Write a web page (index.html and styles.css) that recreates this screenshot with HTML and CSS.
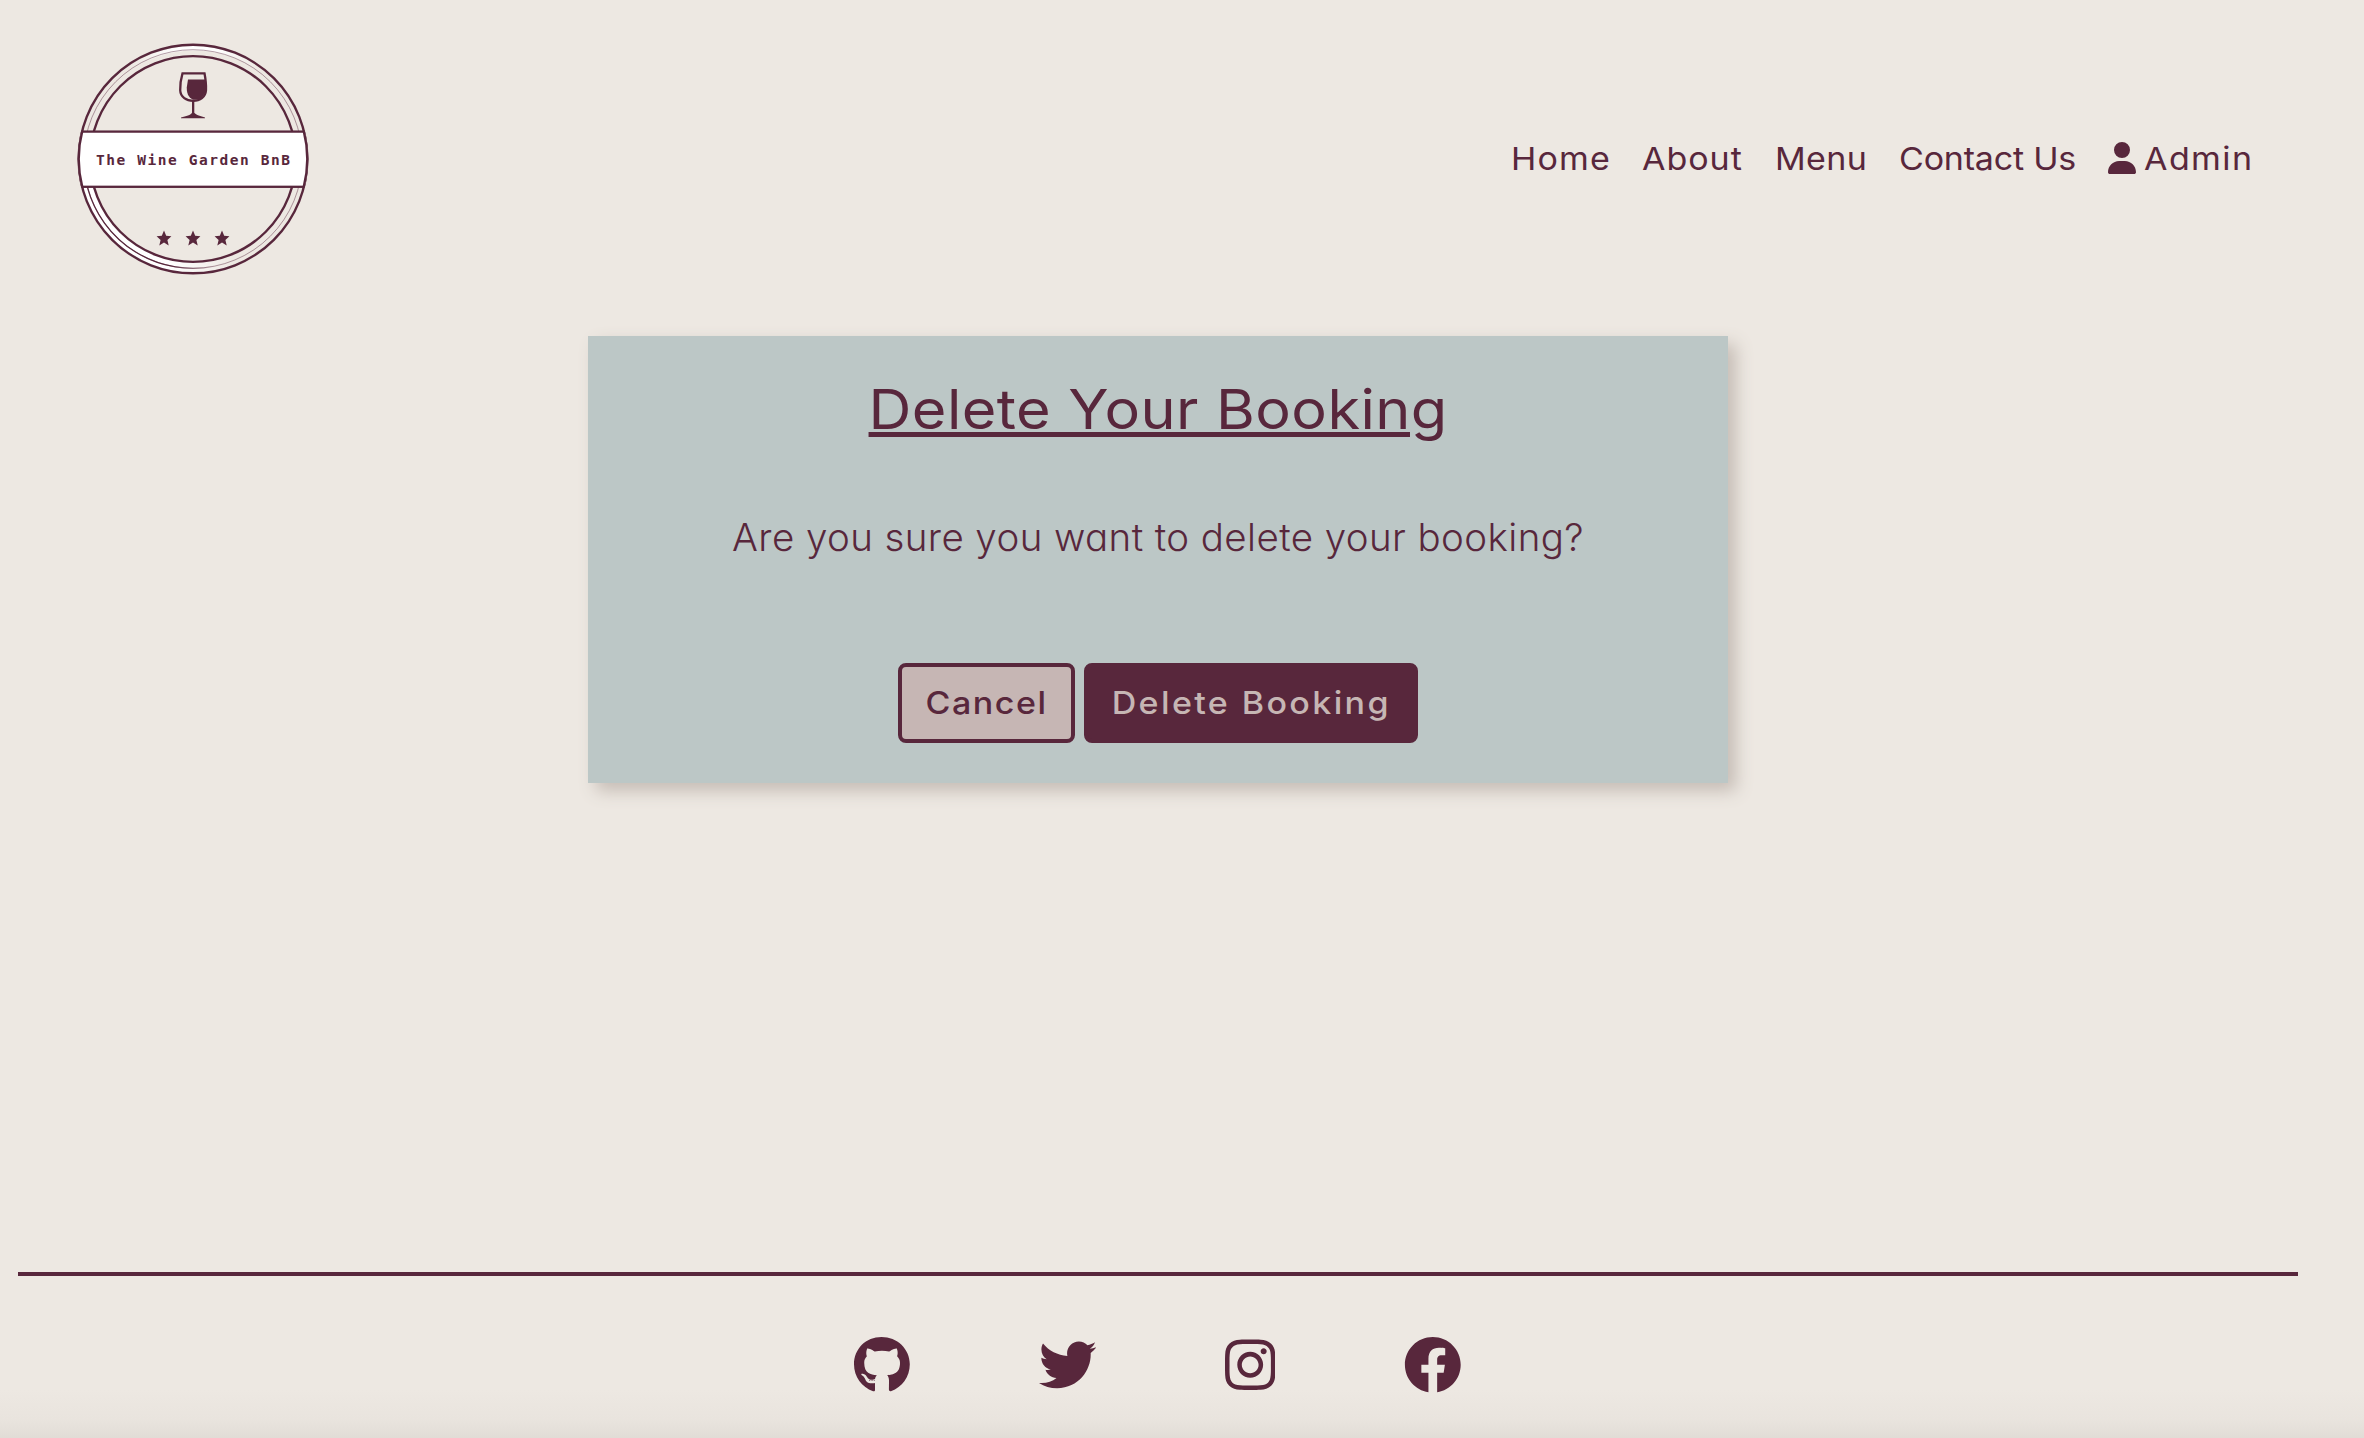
FILE: index.html
```html
<!DOCTYPE html>
<html lang="en">
<head>
<meta charset="utf-8">
<title>The Wine Garden BnB</title>
<link rel="stylesheet" href="styles.css">
</head>
<body>
<header class="header">
  <a class="logo" aria-label="The Wine Garden BnB">
    <svg width="234" height="234" viewBox="76 41.7 234 234">
      <defs>
        <linearGradient id="top" gradientUnits="userSpaceOnUse" x1="130" y1="0" x2="262" y2="0">
          <stop offset="0" stop-color="#fff" stop-opacity="0"/><stop offset=".35" stop-color="#fff"/><stop offset=".65" stop-color="#fff"/><stop offset="1" stop-color="#fff" stop-opacity="0"/>
        </linearGradient>
        <linearGradient id="low" gradientUnits="userSpaceOnUse" x1="170" y1="0" x2="235" y2="0">
          <stop offset="0" stop-color="#fff"/><stop offset="1" stop-color="#fff" stop-opacity="0"/>
        </linearGradient>
        <linearGradient id="line" gradientUnits="userSpaceOnUse" x1="170" y1="0" x2="215" y2="0">
          <stop offset="0" stop-color="#58273c"/><stop offset="1" stop-color="#58273c" stop-opacity="0"/>
        </linearGradient>
        <clipPath id="disc"><circle cx="193" cy="158.7" r="115"/></clipPath>
      </defs>
      <g fill="none" stroke="#58273c">
        <path d="M130 68A111.5 111.5 0 0 1 262 71" stroke="url(#top)" stroke-width="4.5"/>
        <path d="M84 187A112.5 112.5 0 0 0 235 263" stroke="url(#low)" stroke-width="5"/>
        <path d="M90 187A106 106 0 0 0 235 256" stroke="url(#low)" stroke-width="7"/>
        <circle cx="193" cy="158.7" r="114.3" stroke-width="2.4"/>
        <circle cx="193" cy="158.7" r="109.3" stroke-width=".6" opacity=".75"/>
        <path d="M87.5 187A109.3 109.3 0 0 0 215 265.8" stroke="url(#line)" stroke-width="1.3"/>
        <circle cx="193" cy="158.7" r="102.9" stroke-width="2.4"/>
      </g>
      <g clip-path="url(#disc)">
        <rect x="70" y="131.3" width="246" height="55.2" fill="#fff" stroke="#58273c" stroke-width="2.300"/>
      </g>
      <path d="M82.3 130.5A114.3 114.3 0 0 0 82.3 187M303.700 130.500A114.300 114.300 0 0 1 303.700 187" fill="none" stroke="#58273c" stroke-width="2.400"/>
      <text x="96" y="164.7" class="logo-text" textLength="194">The Wine Garden BnB</text>
      <path d="M182.500 73H204.500C206 81 206.200 86 206 90C205.500 97 200 100.500 193.200 100.500S180.500 97 180.200 90C180 84 181 78 182.500 73Z" fill="#ede8e2" stroke="#58273c" stroke-width="2.300"/>
      <path d="M188 79.300H205.500V92L201 99L193 99.500C187.500 96.500 186.700 92 186.800 87Z" fill="#58273c"/>
      <path d="M192 100H194.300V112.500C196 115 201 116 205 117.200V118H181V117.200C186 116 191 115 192 112.500Z" fill="#58273c"/>
      <g fill="#58273c">
        <path id="star" d="M164 230.200L166.200 235.400L171.400 235.900L167.400 239.600L168.700 245.200L164 242.300L159.300 245.200L160.600 239.600L156.600 235.900L161.800 235.400Z"/>
        <use href="#star" x="29"/><use href="#star" x="58"/>
      </g>
    </svg>
  </a>
  <nav class="nav">
    <a class="nav-link home"><span class="wide">Home</span></a>
    <a class="nav-link about"><span class="wide">About</span></a>
    <a class="nav-link menu"><span class="wide">Menu</span></a>
    <a class="nav-link contact"><span class="wide">Contact Us</span></a>
    <a class="nav-link admin"><svg class="user" viewBox="0 0 448 512"><path d="M224 256A128 128 0 1 0 224 0a128 128 0 1 0 0 256zm-45.700 48C79.800 304 0 383.800 0 482.300C0 498.700 13.300 512 29.700 512H418.300c16.400 0 29.700-13.300 29.700-29.700C448 383.800 368.200 304 269.700 304H178.300z"/></svg><span class="wide">Admin</span></a>
  </nav>
</header>
<main class="card">
  <h1 class="title">Delete Your Booking</h1>
  <p class="question">Are you sure you want to delete your booking?</p>
  <div class="actions">
    <button class="btn cancel"><span>Cancel</span></button>
    <button class="btn delete"><span>Delete Booking</span></button>
  </div>
</main>
<footer class="footer">
  <svg class="social" viewBox="0 0 496 512" width="55.8"><path d="M165.900 397.400c0 2-2.300 3.600-5.200 3.600-3.300.3-5.600-1.300-5.600-3.600 0-2 2.300-3.600 5.200-3.600 3-.3 5.600 1.300 5.600 3.600zm-31.100-4.500c-.7 2 1.300 4.300 4.300 4.900 2.600 1 5.600 0 6.200-2s-1.300-4.300-4.300-5.200c-2.600-.7-5.500.3-6.200 2.300zm44.200-1.700c-2.900.7-4.900 2.600-4.600 4.900.3 2 2.900 3.300 5.900 2.600 2.900-.7 4.900-2.600 4.600-4.600-.3-1.900-3-3.200-5.900-2.900zM244.800 8C106.100 8 0 113.300 0 252c0 110.900 69.800 205.800 169.500 239.200 12.800 2.300 17.300-5.600 17.300-12.100 0-6.200-.3-40.400-.3-61.400 0 0-70 15-84.700-29.800 0 0-11.400-29.100-27.800-36.600 0 0-22.900-15.700 1.600-15.400 0 0 24.900 2 38.600 25.800 21.900 38.600 58.600 27.500 72.900 20.900 2.300-16 8.800-27.100 16-33.700-55.900-6.200-112.300-14.300-112.300-110.500 0-27.500 7.600-41.300 23.600-58.900-2.600-6.500-11.100-33.300 2.600-67.900 20.900-6.500 69 27 69 27 20-5.600 41.500-8.500 62.800-8.500s42.800 2.900 62.800 8.500c0 0 48.100-33.600 69-27 13.700 34.700 5.200 61.400 2.600 67.900 16 17.700 25.800 31.500 25.800 58.900 0 96.500-58.900 104.200-114.800 110.500 9.200 7.900 17 22.900 17 46.400 0 33.700-.3 75.400-.3 83.600 0 6.500 4.600 14.400 17.300 12.100C428.200 457.800 496 362.900 496 252 496 113.300 383.500 8 244.800 8z"/></svg>
  <svg class="social" viewBox="0 0 512 512" width="57.6"><path d="M459.370 151.716c.325 4.548.325 9.097.325 13.645 0 138.720-105.583 298.558-298.558 298.558-59.452 0-114.680-17.219-161.137-47.106 8.447.974 16.568 1.299 25.340 1.299 49.055 0 94.213-16.568 130.274-44.832-46.132-.975-84.792-31.188-98.112-72.772 6.498.974 12.995 1.624 19.818 1.624 9.421 0 18.843-1.300 27.614-3.573-48.081-9.747-84.143-51.980-84.143-102.985v-1.299c13.969 7.797 30.214 12.670 47.431 13.319-28.264-18.843-46.781-51.005-46.781-87.391 0-19.492 5.197-37.360 14.294-52.954 51.655 63.675 129.300 105.258 216.365 109.807-1.624-7.797-2.599-15.918-2.599-24.040 0-57.828 46.782-104.934 104.934-104.934 30.213 0 57.502 12.670 76.670 33.137 23.715-4.548 46.456-13.320 66.599-25.340-7.798 24.366-24.366 44.833-46.132 57.827 21.117-2.273 41.584-8.122 60.426-16.243-14.292 20.791-32.161 39.308-52.628 54.253z"/></svg>
  <svg class="social" viewBox="0 0 448 512" width="50.4"><path d="M224.100 141c-63.600 0-114.900 51.300-114.900 114.900s51.300 114.900 114.900 114.900S339 319.500 339 255.900 287.700 141 224.100 141zm0 189.600c-41.100 0-74.700-33.500-74.700-74.700s33.500-74.700 74.700-74.700 74.700 33.500 74.700 74.700-33.600 74.700-74.700 74.700zm146.400-194.300c0 14.900-12 26.800-26.800 26.800-14.900 0-26.800-12-26.800-26.800s12-26.800 26.800-26.800 26.800 12 26.800 26.800zm76.100 27.200c-1.700-35.900-9.900-67.700-36.200-93.900-26.200-26.200-58-34.400-93.900-36.200-37-2.100-147.900-2.100-184.900 0-35.800 1.700-67.600 9.900-93.900 36.100s-34.400 58-36.200 93.900c-2.100 37-2.100 147.900 0 184.900 1.700 35.900 9.900 67.700 36.200 93.900s58 34.400 93.900 36.200c37 2.100 147.900 2.100 184.900 0 35.900-1.700 67.700-9.900 93.900-36.200 26.200-26.200 34.400-58 36.200-93.900 2.100-37 2.100-147.800 0-184.800zM398.800 388c-7.800 19.600-22.900 34.700-42.600 42.600-29.500 11.700-99.500 9-132.100 9s-102.700 2.600-132.100-9c-19.600-7.800-34.700-22.900-42.600-42.600-11.700-29.500-9-99.500-9-132.100s-2.600-102.700 9-132.100c7.800-19.600 22.900-34.700 42.600-42.600 29.500-11.700 99.500-9 132.100-9s102.700-2.600 132.100 9c19.600 7.800 34.700 22.900 42.600 42.600 11.700 29.500 9 99.500 9 132.100s2.700 102.700-9 132.100z"/></svg>
  <svg class="social" viewBox="0 0 512 512" width="57.6"><path d="M504 256C504 119 393 8 256 8S8 119 8 256c0 123.780 90.690 226.380 209.250 245V327.690h-63V256h63v-54.640c0-62.150 37-96.480 93.670-96.480 27.140 0 55.520 4.840 55.520 4.840v61h-31.280c-30.800 0-40.410 19.120-40.410 38.730V256h68.780l-11 71.690h-57.780V501C413.310 482.380 504 379.780 504 256z"/></svg>
</footer>
</body>
</html>
```
FILE: styles.css
```css
* { box-sizing: border-box; }
body {
  margin: 0;
  height: 1438px;
  padding: 0 66px 0 18px;
  display: flex;
  flex-direction: column;
  overflow: hidden;
  color: #58273c;
  background: linear-gradient(to bottom, #ede8e2 1390px, #e9e4de 1420px, #e1dcd6 1438px);
  font-family: Inter, "Open Sans", sans-serif;
}
.header {
  height: 336px;
  padding: 41.7px 46px 0 58px;
  display: flex;
  justify-content: space-between;
}
.logo { display: block; height: 234px; }
.logo svg { display: block; }
.logo-text { font: bold 14.5px "DejaVu Sans Mono", monospace; fill: #58273c; }
.nav {
  height: 234px;
  display: flex;
  align-items: center;
  gap: 32px;
  font-size: 31.5px;
  white-space: nowrap;
}
.wide { display: inline-block; transform: scaleX(1.08); transform-origin: left; }
.nav-link { position: relative; left: 0.5px; }
.home { width: 99px; letter-spacing: 1.1px; }
.about { width: 101px; letter-spacing: 0.9px; }
.menu { width: 92px; letter-spacing: 0.3px; }
.contact { width: 177px; letter-spacing: -0.2px; }
.admin { width: 145px; display: flex; align-items: center; gap: 8px; letter-spacing: 1.3px; }
.user { width: 28px; height: 32px; margin-bottom: 2px; fill: #58273c; }
.card {
  width: 1140px;
  height: 447px;
  margin: 0 auto;
  background: #bcc7c6;
  box-shadow: 8px 8px 16px #c6bdb6;
  display: flex;
  flex-direction: column;
  align-items: center;
}
.title {
  margin: 39px 0 0;
  font-size: 55px;
  line-height: 68px;
  font-weight: 400;
  letter-spacing: 0.4px;
  transform: scaleX(1.08);
  text-decoration: underline;
  text-decoration-thickness: 5px;
  text-underline-offset: 3px;
  white-space: nowrap;
}
.question {
  margin: 69px 0 0;
  font-size: 38.5px;
  line-height: 50px;
  font-weight: 300;
  letter-spacing: 0.4px;
  font-feature-settings: "cv11";
  white-space: nowrap;
}
.actions { margin-top: 101px; display: flex; gap: 9px; }
.btn {
  height: 80px;
  padding: 0 0 2px;
  border: 4px solid #58273c;
  border-radius: 8px;
  font: 450 31.5px Inter, sans-serif;
  white-space: nowrap;
}
.btn span { display: inline-block; transform: scaleX(1.08); }
.cancel { width: 177px; color: #58273c; background: #c6b6b4; letter-spacing: 1.4px; }
.delete { width: 334px; color: #c6b6b4; background: #58273c; letter-spacing: 2.2px; }
.footer {
  height: 166px;
  margin-top: 489px;
  padding-top: 59.5px;
  border-top: 4px solid #58273c;
  display: flex;
  justify-content: center;
  gap: 128.8px;
}
.social { height: 57.6px; fill: #58273c; flex: none; }
```
